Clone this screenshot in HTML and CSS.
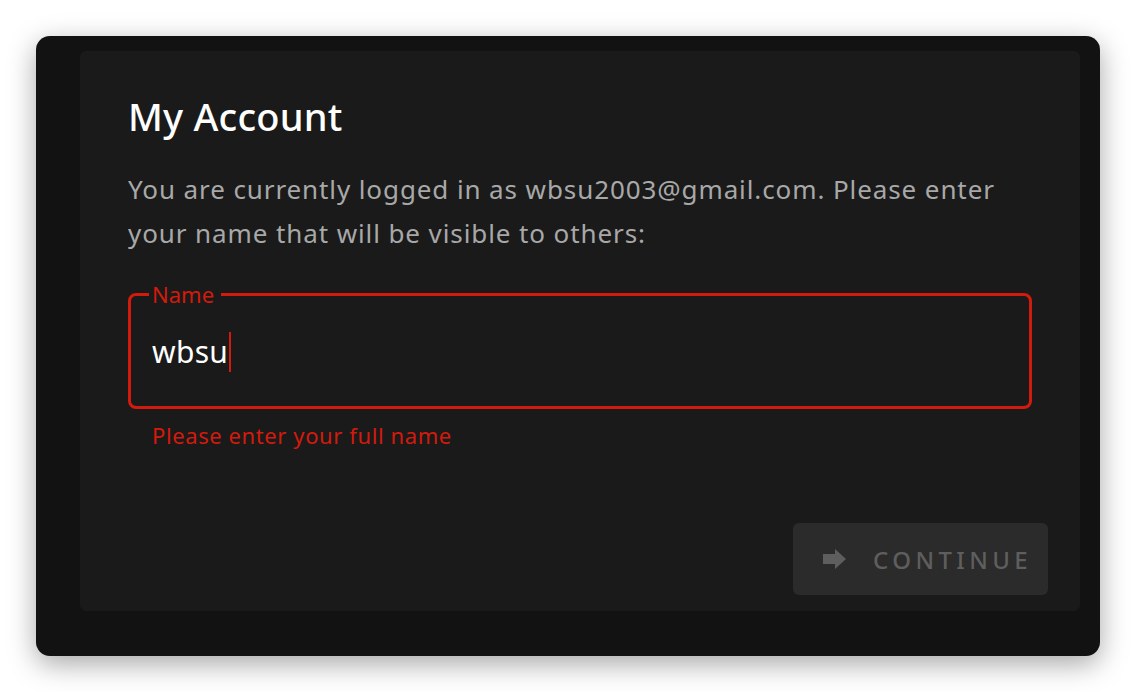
FILE: index.html
```html
<!DOCTYPE html>
<html>
<head>
<meta charset="utf-8">
<link rel="stylesheet" href="styles.css">
</head>
<body>
<div class="card">
  <div class="panel">
    <div class="content">
      <h1 class="title">My Account</h1>
      <p class="desc">You are currently logged in as wbsu2003@gmail.com. Please enter your name that will be visible to others:</p>
      <fieldset class="field">
        <legend class="legend">Name</legend>
        <div class="value">wbsu<span class="caret"></span></div>
      </fieldset>
      <div class="error">Please enter your full name</div>
    </div>
    <div class="actions">
      <button class="btn">
        <svg class="btn-icon" width="24" height="20" viewBox="0 0 24 20"><path d="M0 5h12V0l11 10-11 10v-5H0z" fill="#5e5e5e"/></svg>
        <span class="btn-label">CONTINUE</span>
      </button>
    </div>
  </div>
</div>
</body>
</html>
```
FILE: styles.css
```css
html, body {
  margin: 0;
  padding: 0;
  background: #ffffff;
}
body {
  font-family: "Noto Sans", "Open Sans", sans-serif;
  padding: 36px;
  width: 1064px;
}
.card {
  width: 1064px;
  height: 620px;
  background: #121212;
  border-radius: 14px;
  box-shadow: 0 8px 28px rgba(0, 0, 0, 0.35);
  padding: 15px 20px 0 44px;
  box-sizing: border-box;
}
.panel {
  width: 1000px;
  height: 560px;
  background: #1a1a1a;
  border-radius: 6px;
  display: flex;
  flex-direction: column;
  justify-content: space-between;
}
.content {
  padding: 0 48px 0 48px;
}
.title {
  margin: 0;
  padding-top: 39px;
  font-size: 38px;
  line-height: 52px;
  font-weight: 500;
  color: #ffffff;
  letter-spacing: 0.2px;
}
.desc {
  margin: 25px 0 0 0;
  font-size: 26px;
  line-height: 44px;
  color: #a8a8a8;
  letter-spacing: 0.9px;
}
.field {
  margin: 28px 0 0 0;
  border: 3px solid #d21b0c;
  border-radius: 8px;
  padding: 0 21px;
  height: 126px;
  box-sizing: border-box;
  min-width: 0;
}
.legend {
  padding: 0 7px 0 3px;
  margin-left: -3px;
  color: #d21b0c;
  font-size: 22px;
  line-height: 22px;
}
.value {
  color: #ffffff;
  font-size: 30px;
  line-height: 40px;
  margin-top: 27px;
  display: flex;
  align-items: center;
  letter-spacing: 0.3px;
}
.caret {
  display: inline-block;
  width: 2px;
  height: 40px;
  background: #d21b0c;
  margin-left: 1px;
}
.error {
  color: #d21b0c;
  font-size: 22px;
  line-height: 28px;
  margin: 12px 0 0 24px;
  letter-spacing: 0.6px;
}
.actions {
  display: flex;
  justify-content: flex-end;
  padding: 0 32px 16px 0;
}
.btn {
  width: 255px;
  height: 72px;
  background: #2b2b2b;
  border: none;
  border-radius: 6px;
  display: flex;
  align-items: center;
  padding: 0 0 0 30px;
  box-sizing: border-box;
  font-family: inherit;
}
.btn-icon {
  display: block;
}
.btn-label {
  margin-left: 26px;
  font-size: 24px;
  letter-spacing: 4.4px;
  color: #5e5e5e;
  font-weight: 500;
}
```
